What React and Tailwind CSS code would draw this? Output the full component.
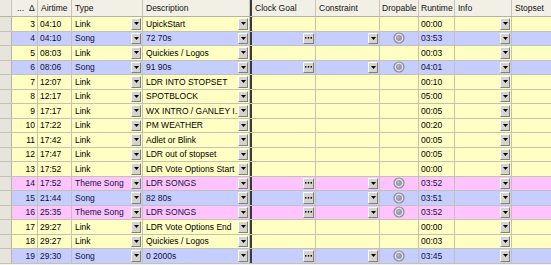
import React from "react";

const rows = [
  [3, "04:10", "Link", "UpickStart", "00:00"],
  [4, "04:10", "Song", "72 70s", "03:53"],
  [5, "08:03", "Link", "Quickies / Logos", "00:03"],
  [6, "08:06", "Song", "91 90s", "04:01"],
  [7, "12:07", "Link", "LDR INTO STOPSET", "00:10"],
  [8, "12:17", "Link", "SPOTBLOCK", "05:00"],
  [9, "17:17", "Link", "WX INTRO / GANLEY I...", "00:05"],
  [10, "17:22", "Link", "PM WEATHER", "00:20"],
  [11, "17:42", "Link", "Adlet or Blink", "00:05"],
  [12, "17:47", "Link", "LDR out of stopset", "00:05"],
  [13, "17:52", "Link", "LDR Vote Options Start", "00:00"],
  [14, "17:52", "Theme Song", "LDR SONGS", "03:52"],
  [15, "21:44", "Song", "82 80s", "03:51"],
  [16, "25:35", "Theme Song", "LDR SONGS", "03:52"],
  [17, "29:27", "Link", "LDR Vote Options End", "00:00"],
  [18, "29:27", "Link", "Quickies / Logos", "00:03"],
  [19, "29:30", "Song", "0 2000s", "03:45"],
];

function Drop() {
  return (
    <div className="absolute right-[1px] top-[1px] bottom-[1px] w-[10px] bg-[#d6d3ce] border-t border-l border-t-white border-l-white border-r border-b border-r-[#808080] border-b-[#808080] flex items-center justify-center">
      <svg width="5" height="3" viewBox="0 0 5 3"><path d="M0 0H5L2.5 3Z" fill="#000" /></svg>
    </div>
  );
}

function Dots() {
  return (
    <div className="absolute right-[1px] top-[1px] bottom-[1px] w-[11px] bg-[#d6d3ce] border-t border-l border-t-white border-l-white border-r border-b border-r-[#808080] border-b-[#808080] flex items-center justify-center">
      <svg width="7" height="2" viewBox="0 0 7 2"><rect x="0" y="0" width="1.4" height="1.6" fill="#000"/><rect x="2.8" y="0" width="1.4" height="1.6" fill="#000"/><rect x="5.6" y="0" width="1.4" height="1.6" fill="#000"/></svg>
    </div>
  );
}

function Radio() {
  return (
    <svg width="12" height="12" viewBox="0 0 12 12" className="shrink-0">
      <circle cx="6" cy="6" r="5.6" fill="#8a8a9a" />
      <circle cx="6" cy="6" r="4.4" fill="#e2e2ea" />
      <circle cx="6" cy="6" r="3" fill="#9a9aac" />
      <circle cx="5.4" cy="5.4" r="1.2" fill="#b8b8c6" />
    </svg>
  );
}

const cell = "relative h-full border-r border-[#c3c3b4] overflow-hidden whitespace-nowrap flex items-center";

export default function App() {
  return (
    <div className="w-[551px] h-[265px] overflow-hidden bg-[#f4f3ee] text-[8.5px] leading-none text-black" style={{ fontFamily: '"Liberation Sans", Arial, sans-serif' }}>
      {/* header */}
      <div className="flex h-[17px] bg-[#f1efe6] border-b border-[#b5b2a6] text-[#111]">
        <div className="w-[12px] h-full border-r border-[#c8c5b8] bg-[#ebe9e0]" />
        <div className="w-[26px] h-full border-r border-[#c8c5b8] flex items-center pl-[5px] gap-[5px]"><span>...</span><span>Δ</span></div>
        <div className="w-[34px] h-full border-r border-[#c8c5b8] flex items-center pl-[3px]">Airtime</div>
        <div className="w-[71px] h-full border-r border-[#c8c5b8] flex items-center pl-[3px]">Type</div>
        <div className="w-[107px] h-full border-r border-[#c8c5b8] flex items-center pl-[3px]">Description</div>
        <div className="w-[2px] h-full bg-[#3a3a3a]" />
        <div className="w-[64px] h-full border-r border-[#c8c5b8] flex items-center pl-[3px]">Clock Goal</div>
        <div className="w-[64px] h-full border-r border-[#c8c5b8] flex items-center pl-[3px]">Constraint</div>
        <div className="w-[39px] h-full border-r border-[#c8c5b8] flex items-center pl-[2px]">Dropable</div>
        <div className="w-[36px] h-full border-r border-[#c8c5b8] flex items-center pl-[2px]">Runtime</div>
        <div className="w-[57px] h-full border-r border-[#c8c5b8] flex items-center pl-[3px]">Info</div>
        <div className="w-[39px] h-full flex items-center pl-[3px]">Stopset</div>
      </div>
      {rows.map(([n, air, type, desc, rt]) => {
        const song = type !== "Link";
        const bg = type === "Link" ? "bg-[#ffffc4]" : type === "Song" ? "bg-[#c6cdff]" : "bg-[#ffc4ff]";
        const tc = song ? "text-[#101040]" : "text-black";
        return (
          <div key={n} className={`flex h-[14.5px] border-b border-[#c3c3b4] ${bg} ${tc}`}>
            <div className="w-[12px] h-full bg-[#e6e4dc] border-r border-[#b5b2a6]" />
            <div className={`${cell} w-[26px] justify-end pr-[2px]`}>{n}</div>
            <div className={`${cell} w-[34px] pl-[2px]`}>{air}</div>
            <div className={`${cell} w-[71px] pl-[3px]`}>{type}<Drop /></div>
            <div className={`${cell} w-[107px] pl-[3px]`}>{desc}<Drop /></div>
            <div className="w-[2px] h-full bg-[#3a3a3a]" />
            <div className={`${cell} w-[64px]`}>{song && <Dots />}</div>
            <div className={`${cell} w-[64px]`}>{song && <Drop />}</div>
            <div className={`${cell} w-[39px] justify-center`}>{song && <Radio />}</div>
            <div className={`${cell} w-[36px] pl-[2px]`}>{rt}</div>
            <div className={`${cell} w-[57px]`}><Drop /></div>
            <div className={`${cell} w-[39px] border-r-0`} />
          </div>
        );
      })}
    </div>
  );
}
